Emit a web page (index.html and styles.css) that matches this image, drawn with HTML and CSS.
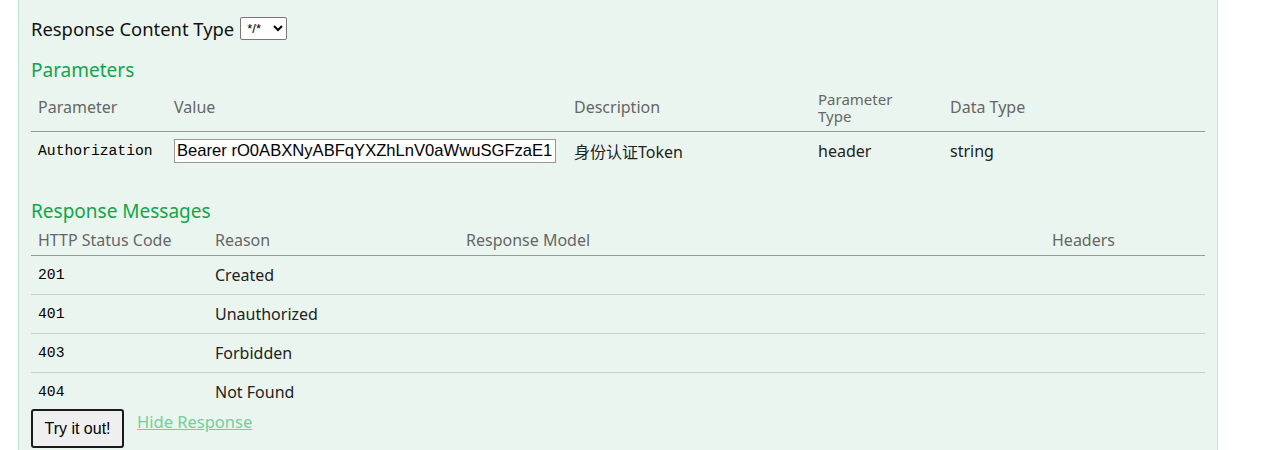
FILE: index.html
```html
<!DOCTYPE html>
<html>
<head>
<meta charset="utf-8">
<link rel="stylesheet" href="styles.css">
</head>
<body>
<div class="panel">
  <div class="ctype">
    <span>Response Content Type</span>
    <select class="sel"><option>*/*</option></select>
  </div>
  <h4 class="title">Parameters</h4>
  <table class="tbl params">
    <colgroup>
      <col style="width:136px"><col style="width:400px"><col style="width:244px"><col style="width:132px"><col>
    </colgroup>
    <thead>
      <tr><th>Parameter</th><th>Value</th><th>Description</th><th class="two">Parameter<br>Type</th><th>Data Type</th></tr>
    </thead>
    <tbody>
      <tr>
        <td class="code">Authorization</td>
        <td><input class="inp" type="text" value="Bearer rO0ABXNyABFqYXZhLnV0aWwuSGFzaE1hcAUH2sHDFmDRAwACRgAKbG9hZEZhY3Rvcg"></td>
        <td>身份认证Token</td>
        <td>header</td>
        <td>string</td>
      </tr>
    </tbody>
  </table>
  <h4 class="title title2">Response Messages</h4>
  <table class="tbl resp">
    <colgroup>
      <col style="width:177px"><col style="width:251px"><col style="width:586px"><col>
    </colgroup>
    <thead>
      <tr><th>HTTP Status Code</th><th>Reason</th><th>Response Model</th><th>Headers</th></tr>
    </thead>
    <tbody>
      <tr><td class="code">201</td><td>Created</td><td></td><td></td></tr>
      <tr><td class="code">401</td><td>Unauthorized</td><td></td><td></td></tr>
      <tr><td class="code">403</td><td>Forbidden</td><td></td><td></td></tr>
      <tr><td class="code">404</td><td>Not Found</td><td></td><td></td></tr>
    </tbody>
  </table>
  <div class="actions">
    <button class="btn">Try it out!</button>
    <a class="hide" href="#">Hide Response</a>
  </div>
</div>
</body>
</html>
```
FILE: styles.css
```css
html, body {
  margin: 0;
  padding: 0;
  background: #fff;
}
body {
  font-family: "Noto Sans", "Noto Sans CJK SC", sans-serif;
  color: #222;
}
.panel {
  margin-left: 18px;
  width: 1174px;
  height: 450px;
  box-sizing: content-box;
  padding: 0 12px 0 12px;
  background: #ebf5ef;
  border-left: 1px solid #c3e6d2;
  border-right: 1px solid #c3e6d2;
  overflow: hidden;
}
.ctype {
  padding-top: 15px;
  display: flex;
  align-items: center;
  gap: 6px;
  font-size: 18.4px;
  color: #111;
  height: 26px;
}
.sel {
  height: 23px;
  width: 47px;
  font-family: "Liberation Sans", sans-serif;
  font-size: 13px;
  border: 1px solid #767676;
  border-radius: 2px;
  background: #fff;
  padding: 0 2px;
}
.title {
  margin: 0;
  padding-top: 16px;
  font-size: 19px;
  font-weight: normal;
  color: #10a54a;
  line-height: 26px;
}
.tbl {
  width: 100%;
  border-collapse: collapse;
  table-layout: fixed;
}
.tbl th {
  text-align: left;
  font-weight: normal;
  color: #666;
  font-size: 16px;
  padding: 0 7px;
  border-bottom: 1px solid #999;
  vertical-align: middle;
}
.params th {
  height: 46px;
}
.params th.two {
  font-size: 15px;
  line-height: 17px;
  padding-top: 2px;
}
.tbl td {
  font-size: 16px;
  padding: 0 7px;
  color: #222;
  vertical-align: middle;
}
.params td {
  height: 38px;
}
.resp th {
  height: 31px;
}
.resp td {
  height: 38px;
  border-bottom: 1px solid #ccc;
}
.resp tbody tr:last-child td {
  border-bottom: none;
}
.tbl td.code {
  font-family: "Liberation Mono", monospace;
  font-size: 14.7px;
  color: #000;
}
.inp {
  width: 382px;
  height: 24px;
  box-sizing: border-box;
  border: 1px solid #999;
  font-family: "Liberation Sans", sans-serif;
  font-size: 16.6px;
  padding: 0 2px;
  background: #fff;
  margin-left: 0;
}
.title2 {
  padding-top: 28px;
}
.actions {
  display: flex;
  align-items: flex-start;
  gap: 13px;
  margin-top: -2px;
}
.btn {
  width: 93px;
  height: 39px;
  border: 2px solid #1a1a1a;
  border-radius: 3px;
  background: #efefef;
  font-family: "Liberation Sans", sans-serif;
  font-size: 16px;
  color: #000;
}
.hide {
  color: #6fd19a;
  font-size: 16.5px;
  text-decoration: underline;
  line-height: 26px;
}
```
